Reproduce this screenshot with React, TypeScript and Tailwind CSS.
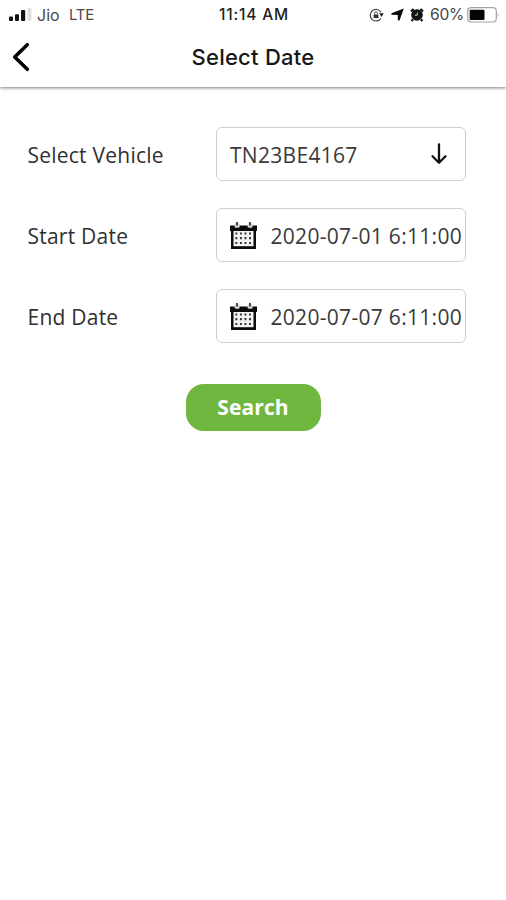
const label = "w-[189px] shrink-0 whitespace-nowrap pl-[0.5px] pt-[2px] font-['Open_Sans',sans-serif] text-[21px] leading-[30px] tracking-[0.23px] text-[#303030]";
const field = "flex h-[54px] w-[250px] shrink-0 items-center rounded-[6px] border border-[#cecece] bg-white pl-[13px] font-['Open_Sans',sans-serif] text-[21px] leading-[30px] tracking-[0.3px] text-[#3a3a3a]";

function CalendarIcon() {
  return (
    <svg className="shrink-0" width="27" height="27" viewBox="0 0 27 27">
      <path d="M0 3.5H27V9H26V27H1V9H0Z" fill="#0b0b0b" />
      <rect x="3.5" y="9" width="20" height="15.2" fill="#f3f3f3" />
      <rect x="4.6" y="1" width="5" height="4.8" rx="1.5" fill="#d6d6d6" />
      <rect x="17.6" y="1" width="5" height="4.8" rx="1.5" fill="#d6d6d6" />
      <path d="M7 0V3.6M20 0V3.6" stroke="#333" strokeWidth="1.7" />
      <path
        d="M5.4 11.5H21.4M5.4 16.2H21.4M5.4 21H21.4"
        stroke="#333"
        strokeWidth="2.2"
        strokeDasharray="1.9 2.65"
      />
    </svg>
  );
}

function StatusBar() {
  return (
    <div className="grid h-7 grid-cols-3 items-center pt-px font-[Inter,sans-serif] text-[15px] leading-[18px]">
      <div className="flex items-center pl-[9px] text-[#4a4a4a]">
        <svg width="23" height="14" viewBox="0 0 23 14">
          <rect x="0" y="8.5" width="4" height="4.5" rx="1" fill="#111" />
          <rect x="6" y="6.2" width="4" height="6.8" rx="1" fill="#111" />
          <rect x="12" y="2" width="4.2" height="11" rx="1" fill="#111" />
          <rect x="18.5" y="0" width="4" height="13" rx="1" fill="#dedede" />
        </svg>
        <span className="ml-[5px] w-8 text-[16px]">Jio</span>
        <span className="text-[15px] tracking-[-0.2px]">LTE</span>
      </div>
      <div className="whitespace-nowrap pl-[2px] pt-px text-center text-[15.5px] font-medium tracking-[0.8px] text-[#222]">11:14 AM</div>
      <div className="flex items-center justify-end pr-[7px] text-[#444]">
        <svg width="15" height="14" viewBox="0 0 15 14" fill="none">
          <path d="M12 4.2A5.8 5.8 0 1 0 12 10.2" stroke="#444" strokeWidth="1.2" />
          <path d="M10.2 5.3H14.8L12.5 9Z" fill="#222" />
          <rect x="4.6" y="6.4" width="4.8" height="3.6" rx=".6" fill="#333" />
          <path d="M5.6 6.5V5.2a1.4 1.4 0 0 1 2.8 0V6.5" stroke="#555" />
        </svg>
        <svg className="ml-[7px]" width="13" height="13" viewBox="0 0 13 13">
          <path d="M12.8 .5L8.5 12.5L6.8 12.3L6.8 7L.3 6.8L.5 5.3Z" fill="#080808" />
        </svg>
        <svg className="ml-[6px]" width="14" height="14" viewBox="0 0 14 14" fill="none">
          <circle cx="7" cy="7" r="5.8" fill="#111" />
          <path d="M1 3.4L3.7 1M13 3.4L10.3 1M3 11.3L1.6 13.2M11 11.3L12.4 13.2" stroke="#111" strokeWidth="2.2" />
          <path d="M7.3 4.5V7.2H4.8" stroke="#ccc" strokeWidth="1" />
        </svg>
        <span className="ml-[6px] w-[37px] whitespace-nowrap pt-px text-[15.5px] tracking-[-0.2px]">60%</span>
        <svg width="32" height="16" viewBox="0 0 32 16">
          <rect x=".7" y=".7" width="28.6" height="14.3" rx="3.5" fill="white" stroke="#a4a4a4" strokeWidth="1.2" />
          <rect x="2.7" y="2.7" width="14.8" height="10.3" rx="1" fill="#050505" />
          <path d="M30.6 5.5Q32.4 7.8 30.6 10.2Z" fill="#aaa" />
        </svg>
      </div>
    </div>
  );
}

export default function App() {
  return (
    <div className="h-[900px] w-[506px] overflow-hidden bg-white">
      <header className="h-[87px] bg-white shadow-[0_1px_3px_0_rgba(0,0,0,0.5)]">
        <StatusBar />
        <div className="grid h-[58px] grid-cols-[60px_1fr_60px] items-center">
          <button className="pl-3" aria-label="Back">
            <svg width="18" height="30" viewBox="0 0 18 30" fill="none">
              <path d="M15.3 2.7L2.7 15L15.3 27.3" stroke="#000" strokeWidth="3.6" strokeLinecap="round" strokeLinejoin="round" />
            </svg>
          </button>
          <h1 className="whitespace-nowrap text-center font-[Inter,sans-serif] text-[22px] font-medium leading-7 tracking-[0.25px] text-[#171717]">
            Select Date
          </h1>
        </div>
      </header>
      <main className="flex flex-col gap-[27px] pl-[27px] pt-10">
        <div className="flex items-center">
          <span className={label}>Select Vehicle</span>
          <div className={field + " justify-between pr-[17px]"}>
            <span className="pt-[2px]">TN23BE4167</span>
            <svg width="18" height="22" viewBox="0 0 18 22" fill="none">
              <path d="M9 1.5V19.5M2.5 13.3L9 19.8L15.5 13.3" stroke="#111" strokeWidth="2.3" strokeLinecap="round" strokeLinejoin="round" />
            </svg>
          </div>
        </div>
        <div className="flex items-center">
          <span className={label}>Start Date</span>
          <div className={field}>
            <CalendarIcon />
            <span className="ml-[13.5px] whitespace-nowrap pt-[2px]">2020-07-01 6:11:00</span>
          </div>
        </div>
        <div className="flex items-center">
          <span className={label}>End Date</span>
          <div className={field}>
            <CalendarIcon />
            <span className="ml-[13.5px] whitespace-nowrap pt-[2px]">2020-07-07 6:11:00</span>
          </div>
        </div>
      </main>
      <div className="flex justify-center pt-[41px]">
        <button className="h-[47px] w-[135px] rounded-[18px] bg-[#70b740] font-['Open_Sans',sans-serif] text-[21px] font-bold tracking-[0.1px] text-white">
          Search
        </button>
      </div>
    </div>
  );
}
